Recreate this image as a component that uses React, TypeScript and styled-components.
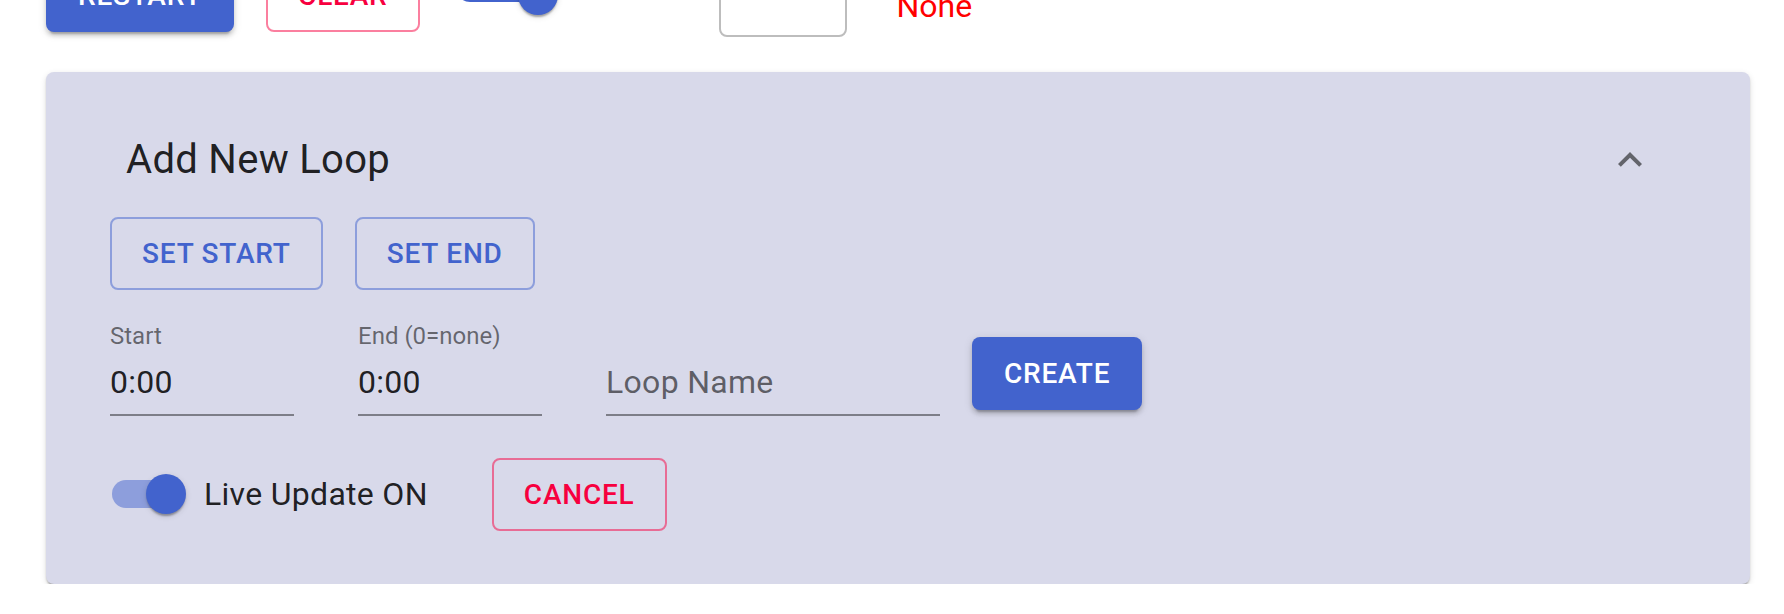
import styled, { createGlobalStyle } from "styled-components";

const primary = "#4263cd";
const secondary = "#f7003f";

const GlobalStyle = createGlobalStyle`
    html, body {
        margin: 0;
        padding: 0;
        background: #ffffff;
        overflow: hidden;
        font-family: Roboto, "Liberation Sans", sans-serif;
    }
`;

const Page = {
    Wrapper: styled.div`
        padding: 0 34px 0 46px;
    `,
};

const Top = {
    Row: styled.div`
        height: 86px;
        margin-top: -48px;
        display: flex;
        align-items: center;
    `,
    Toggle: styled.div`
        position: relative;
        width: 102px;
        height: 40px;
        margin-left: 36px;
    `,
    ToggleTrack: styled.div`
        position: absolute;
        left: 0;
        top: -1px;
        width: 82px;
        height: 28px;
        border-radius: 14px;
        background: ${primary};
    `,
    Box: styled.div`
        width: 128px;
        height: 80px;
        margin-left: 161px;
        margin-top: 4px;
        box-sizing: border-box;
        border: 2px solid #bdbdbd;
        border-radius: 8px;
        background: #ffffff;
    `,
    Status: styled.div`
        margin-left: 50px;
        margin-top: 21px;
        font-size: 32px;
        line-height: 32px;
        color: #ff0000;
    `,
};

const Button = styled.button<{ $tone: "primary" | "secondary"; $filled?: boolean; $gap?: number }>`
    box-sizing: border-box;
    height: 73px;
    min-width: 128px;
    margin: 0 0 0 ${(p) => p.$gap ?? 0}px;
    padding: ${(p) => (p.$filled ? "0 32px" : "0 30px")};
    border-radius: 8px;
    font-family: Roboto, "Liberation Sans", sans-serif;
    font-size: 28px;
    font-weight: 500;
    letter-spacing: 0.8px;
    line-height: 49px;
    text-transform: uppercase;
    flex-shrink: 0;
    cursor: pointer;
    color: ${(p) => (p.$filled ? "#ffffff" : p.$tone === "primary" ? primary : secondary)};
    background: ${(p) => (p.$filled ? primary : "transparent")};
    border: ${(p) =>
        p.$filled
            ? "none"
            : p.$tone === "primary"
            ? "2px solid rgba(66, 99, 205, 0.5)"
            : "2px solid rgba(247, 0, 63, 0.5)"};
    box-shadow: ${(p) =>
        p.$filled
            ? "0 6px 2px -4px rgba(0,0,0,0.2), 0 4px 4px 0 rgba(0,0,0,0.14), 0 2px 10px 0 rgba(0,0,0,0.12)"
            : "none"};
`;

const Switch = {
    Root: styled.span<{ $offset?: number }>`
        position: relative;
        display: inline-block;
        width: 116px;
        height: 76px;
        flex-shrink: 0;
        margin-left: ${(p) => p.$offset ?? 0}px;
    `,
    Track: styled.span`
        position: absolute;
        left: 24px;
        top: 24px;
        width: 68px;
        height: 28px;
        border-radius: 14px;
        background: ${primary};
        opacity: 0.5;
    `,
    Thumb: styled.span<{ $left: number; $top: number }>`
        position: absolute;
        left: ${(p) => p.$left}px;
        top: ${(p) => p.$top}px;
        width: 40px;
        height: 40px;
        border-radius: 50%;
        background: ${primary};
        box-shadow: 0 4px 2px -2px rgba(0, 0, 0, 0.2), 0 2px 2px 0 rgba(0, 0, 0, 0.14),
            0 2px 6px 0 rgba(0, 0, 0, 0.12);
    `,
    Label: styled.span`
        font-size: 32px;
        line-height: 32px;
        letter-spacing: 0.3px;
        color: rgba(0, 0, 0, 0.87);
        white-space: nowrap;
    `,
};

const Panel = {
    Wrapper: styled.section`
        margin-top: 34px;
        width: 1704px;
        box-sizing: border-box;
        border-radius: 8px;
        background: #d8d9ea;
        padding-bottom: 52px;
        box-shadow: 0 4px 2px -2px rgba(0, 0, 0, 0.2), 0 2px 2px 0 rgba(0, 0, 0, 0.14),
            0 2px 6px 0 rgba(0, 0, 0, 0.12);
    `,
    Summary: styled.div`
        display: flex;
        align-items: center;
        justify-content: space-between;
        padding: 64px 96px 0 80px;
    `,
    Title: styled.h2`
        margin: 0;
        font-size: 40px;
        line-height: 48px;
        font-weight: 400;
        letter-spacing: 0.3px;
        color: rgba(0, 0, 0, 0.87);
    `,
    Chevron: styled.span`
        display: flex;
        width: 48px;
        height: 48px;
        color: rgba(0, 0, 0, 0.54);
    `,
    Details: styled.div`
        padding: 33px 0 0 64px;
        display: flex;
        flex-direction: column;
    `,
};

const Row = styled.div<{ $top?: number; $align?: string }>`
    display: flex;
    align-items: ${(p) => p.$align ?? "center"};
    margin-top: ${(p) => p.$top ?? 0}px;
`;

const Field = {
    Wrapper: styled.div<{ $width: number; $gap?: number }>`
        width: ${(p) => p.$width}px;
        margin-left: ${(p) => p.$gap ?? 0}px;
        display: flex;
        flex-direction: column;
        flex-shrink: 0;
    `,
    Label: styled.label`
        height: 24px;
        font-size: 24px;
        line-height: 24px;
        color: rgba(0, 0, 0, 0.54);
        white-space: nowrap;
    `,
    Value: styled.div<{ $placeholder?: boolean }>`
        margin-top: 18px;
        height: 32px;
        padding-bottom: 16px;
        border-bottom: 2px solid rgba(0, 0, 0, 0.42);
        font-size: 32px;
        line-height: 32px;
        letter-spacing: 0.3px;
        color: ${(p) => (p.$placeholder ? "rgba(0, 0, 0, 0.58)" : "rgba(0, 0, 0, 0.87)")};
    `,
};

function ExpandLess() {
    return (
        <svg width="48" height="48" viewBox="0 0 24 24" fill="currentColor">
            <path d="M12 8l-6 6 1.41 1.41L12 10.83l4.59 4.58L18 14z" />
        </svg>
    );
}

export default function App() {
    return (
        <>
            <GlobalStyle />
            <Page.Wrapper>
                <Top.Row>
                    <Button $tone="primary" $filled>
                        Restart
                    </Button>
                    <Button $tone="secondary" $gap={32}>
                        Clear
                    </Button>
                    <Top.Toggle>
                        <Top.ToggleTrack />
                        <Switch.Thumb $left={62} $top={0} />
                    </Top.Toggle>
                    <Top.Box />
                    <Top.Status>None</Top.Status>
                </Top.Row>

                <Panel.Wrapper>
                    <Panel.Summary>
                        <Panel.Title>Add New Loop</Panel.Title>
                        <Panel.Chevron>
                            <ExpandLess />
                        </Panel.Chevron>
                    </Panel.Summary>
                    <Panel.Details>
                        <Row>
                            <Button $tone="primary">Set Start</Button>
                            <Button $tone="primary" $gap={32}>
                                Set End
                            </Button>
                        </Row>
                        <Row $top={34} $align="flex-start">
                            <Field.Wrapper $width={184}>
                                <Field.Label>Start</Field.Label>
                                <Field.Value>0:00</Field.Value>
                            </Field.Wrapper>
                            <Field.Wrapper $width={184} $gap={64}>
                                <Field.Label>End (0=none)</Field.Label>
                                <Field.Value>0:00</Field.Value>
                            </Field.Wrapper>
                            <Field.Wrapper $width={334} $gap={64}>
                                <Field.Label />
                                <Field.Value $placeholder>Loop Name</Field.Value>
                            </Field.Wrapper>
                            <Button $tone="primary" $filled $gap={32} style={{ marginTop: 13 }}>
                                Create
                            </Button>
                        </Row>
                        <Row $top={40}>
                            <Switch.Root $offset={-22}>
                                <Switch.Track />
                                <Switch.Thumb $left={58} $top={18} />
                            </Switch.Root>
                            <Switch.Label>Live Update ON</Switch.Label>
                            <Button $tone="secondary" $gap={64}>
                                Cancel
                            </Button>
                        </Row>
                    </Panel.Details>
                </Panel.Wrapper>
            </Page.Wrapper>
        </>
    );
}
